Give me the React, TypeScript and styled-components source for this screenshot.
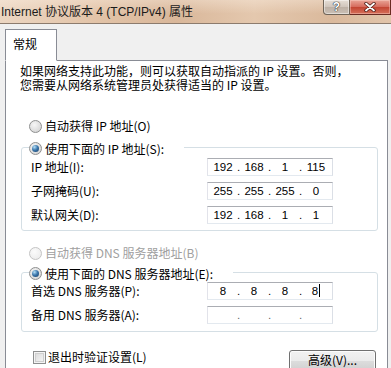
import React from 'react'
import styled, { createGlobalStyle } from 'styled-components'

const GlobalStyle = createGlobalStyle`
    html, body {
        margin: 0;
        padding: 0;
    }
    body {
        width: 391px;
        height: 368px;
        overflow: hidden;
        background: #f0f0f0;
        font-family: "Noto Sans CJK SC", "Noto Sans", sans-serif;
        font-size: 12px;
        color: #000;
    }
    * {
        box-sizing: border-box;
    }
`

const TitleBar = styled.div`
    display: flex;
    justify-content: space-between;
    align-items: flex-start;
    height: 24px;
    border-bottom: 1px solid #8c7b6d;
    background:
        linear-gradient(180deg, rgba(255, 245, 235, 0.35), rgba(255, 255, 255, 0) 60%),
        linear-gradient(90deg, #ecd6c2 0%, #e2c3a7 25%, #d9b79a 45%, #e4c8ae 65%, #dab99c 85%, #e1c4aa 100%);
`
const Title = styled.div`
    padding: 4px 0 0 1px;
    font-family: "Liberation Sans", "Noto Sans CJK SC", sans-serif;
    font-size: 12px;
    line-height: 16px;
    color: #1b1b1b;
    white-space: nowrap;
`
const Controls = styled.div`
    display: flex;
`
const HelpButton = styled.div`
    width: 27px;
    height: 15px;
    display: flex;
    align-items: center;
    justify-content: center;
    border: 1px solid #6f6458;
    border-top: none;
    border-radius: 0 0 0 4px;
    background: linear-gradient(180deg, #e6ded6 0%, #cfc5bb 50%, #bcb0a5 50%, #cbc0b5 100%);
    box-shadow: inset 0 0 0 1px rgba(255, 255, 255, 0.45);
    font-family: "Liberation Sans", sans-serif;
    font-weight: bold;
    font-size: 12px;
    line-height: 12px;
    color: #fff;
    text-shadow: 0 0 1px #333, 0 0 1px #333, 0 0 1px #333;
`
const CloseButton = styled.div`
    width: 41px;
    height: 15px;
    display: flex;
    align-items: center;
    justify-content: center;
    border: 1px solid #6a2a22;
    border-top: none;
    border-left: none;
    background: linear-gradient(180deg, #e9a597 0%, #d5695b 50%, #c24331 50%, #d6705a 100%);
    box-shadow: inset 0 0 0 1px rgba(255, 220, 210, 0.4);
`

const TabStrip = styled.div`
    display: flex;
    padding: 5px 0 0 5px;
`
const Tab = styled.div`
    position: relative;
    z-index: 1;
    width: 52px;
    height: 32px;
    margin-bottom: -1px;
    padding: 6px 0 0 7px;
    background: #fff;
    border: 1px solid #898c95;
    border-bottom: 1px solid #fff;
    line-height: 16px;
`

const Panel = styled.div`
    height: 320px;
    margin: 0 3px 0 5px;
    padding-top: 3px;
    background: #fff;
    border: 1px solid #898c95;
`
const Description = styled.p`
    margin: 0;
    padding-left: 14px;
    line-height: 14px;
    white-space: nowrap;
`

const OptionRow = styled.div<{ $top: number }>`
    display: flex;
    align-items: center;
    height: 18px;
    margin: ${p => p.$top}px 0 0 23px;
`
const OptionLabel = styled.span<{ $disabled?: boolean }>`
    display: inline-flex;
    align-items: center;
    gap: 3px;
    height: 18px;
    line-height: 18px;
    white-space: nowrap;
    color: ${p => (p.$disabled ? '#a0a0a0' : '#000')};
`
const RadioCircle = styled.span<{ $disabled?: boolean }>`
    display: inline-flex;
    align-items: center;
    justify-content: center;
    width: 13px;
    height: 13px;
    border-radius: 50%;
    border: 1px solid ${p => (p.$disabled ? '#c4c4c4' : '#8e8f8f')};
    background: ${p =>
        p.$disabled
            ? 'radial-gradient(circle at 40% 35%, #fbfbfb, #e8e8e8)'
            : 'radial-gradient(circle at 40% 35%, #f6f6f6, #d6d6d6 80%, #c9c9c9)'};
`
const RadioDot = styled.span`
    width: 7px;
    height: 7px;
    border-radius: 50%;
    background: radial-gradient(circle at 35% 30%, #b5e0f7 0%, #3d78ad 45%, #123a62 100%);
`

const Group = styled.fieldset<{ $top: number; $bottom: number }>`
    margin: ${p => p.$top}px 9px 0 15px;
    padding: 0 0 ${p => p.$bottom}px 7px;
    border: 1px solid #d5dfe5;
    border-radius: 3px;
    min-width: 0;
`
const Legend = styled.legend`
    padding: 0 20px 0 0;
    height: 18px;
    line-height: 18px;
`
const FieldList = styled.div<{ $top: number }>`
    display: flex;
    flex-direction: column;
    gap: 6px;
    padding: ${p => p.$top}px 0 0 2px;
`
const FieldRow = styled.div`
    display: grid;
    grid-template-columns: 176px 126px;
    align-items: center;
    height: 18px;
`
const FieldLabel = styled.span`
    white-space: nowrap;
    line-height: 18px;
`
const IpBox = styled.div`
    display: flex;
    align-items: center;
    height: 18px;
    padding-left: 3px;
    background: #fff;
    border: 1px solid;
    border-color: #abadb3 #dbdfe6 #e3e9ef #e2e3ea;
    font-family: "Liberation Sans", sans-serif;
    font-size: 11.5px;
    line-height: 14px;
`
const Octet = styled.span`
    width: 24px;
    text-align: center;
`
const Dot = styled.span<{ $faint?: boolean }>`
    width: 7px;
    text-align: center;
    color: ${p => (p.$faint ? '#666' : '#000')};
`
const Caret = styled.span`
    display: inline-block;
    width: 1px;
    height: 13px;
    margin-left: 1px;
    vertical-align: -2px;
    background: #000;
`

const Footer = styled.div`
    display: flex;
    justify-content: space-between;
    align-items: flex-start;
    margin-top: 18px;
    padding: 0 11px 0 27px;
`
const CheckLabel = styled.span`
    display: inline-flex;
    align-items: center;
    gap: 2px;
    height: 14px;
    line-height: 14px;
    white-space: nowrap;
`
const CheckBox = styled.span`
    width: 13px;
    height: 13px;
    border: 1px solid #8e8f8f;
    background: linear-gradient(135deg, #d6d6d6 0%, #ececec 60%, #f9f9f9 100%);
    box-shadow: inset 0 0 0 1px #f4f4f4, inset 0 0 0 2px #cfcfcf;
`
const PushButton = styled.button`
    width: 87px;
    height: 22px;
    padding: 0 0 2px;
    border: 1px solid #707070;
    border-radius: 3px;
    background: linear-gradient(180deg, #f2f2f2 0%, #ebebeb 49%, #dddddd 50%, #cfcfcf 100%);
    box-shadow: inset 0 0 0 1px #fcfcfc;
    font-family: "Noto Sans CJK SC", sans-serif;
    font-size: 12px;
    line-height: 18px;
    color: #000;
`

type Radio = { text: string; checked?: boolean; disabled?: boolean }

const RadioOption = ({ text, checked, disabled }: Radio) => (
    <OptionLabel $disabled={disabled}>
        <RadioCircle $disabled={disabled}>{checked && <RadioDot />}</RadioCircle>
        {text}
    </OptionLabel>
)

const IpField = ({ parts, caret }: { parts: string[]; caret?: boolean }) => {
    const empty = parts.every(p => p === '')
    return (
        <IpBox>
            {parts.map((part, index) => (
                <React.Fragment key={index}>
                    {index > 0 && <Dot $faint={empty}>.</Dot>}
                    <Octet>
                        {part}
                        {caret && index === parts.length - 1 && <Caret />}
                    </Octet>
                </React.Fragment>
            ))}
        </IpBox>
    )
}

const ipRows = [
    { label: 'IP 地址(I):', parts: ['192', '168', '1', '115'] },
    { label: '子网掩码(U):', parts: ['255', '255', '255', '0'] },
    { label: '默认网关(D):', parts: ['192', '168', '1', '1'] },
]

const dnsRows = [
    { label: '首选 DNS 服务器(P):', parts: ['8', '8', '8', '8'], caret: true },
    { label: '备用 DNS 服务器(A):', parts: ['', '', '', ''] },
]

const App = () => {
    return (
        <>
            <GlobalStyle />
            <TitleBar>
                <Title>Internet 协议版本 4 (TCP/IPv4) 属性</Title>
                <Controls>
                    <HelpButton>?</HelpButton>
                    <CloseButton>
                        <svg width="12" height="10" viewBox="0 0 12 10">
                            <path d="M2 1.5 L10 8.5 M10 1.5 L2 8.5" stroke="#4a1a14" strokeWidth="3.4" strokeLinecap="round" />
                            <path d="M2 1.5 L10 8.5 M10 1.5 L2 8.5" stroke="#fff" strokeWidth="1.8" strokeLinecap="round" />
                        </svg>
                    </CloseButton>
                </Controls>
            </TitleBar>

            <TabStrip>
                <Tab>常规</Tab>
            </TabStrip>

            <Panel>
                <Description>
                    如果网络支持此功能，则可以获取自动指派的 IP 设置。否则，
                    <br />
                    您需要从网络系统管理员处获得适当的 IP 设置。
                </Description>

                <OptionRow $top={25}>
                    <RadioOption text="自动获得 IP 地址(O)" />
                </OptionRow>
                <Group $top={3} $bottom={6}>
                    <Legend>
                        <RadioOption text="使用下面的 IP 地址(S):" checked />
                    </Legend>
                    <FieldList $top={2}>
                        {ipRows.map(row => (
                            <FieldRow key={row.label}>
                                <FieldLabel>{row.label}</FieldLabel>
                                <IpField parts={row.parts} />
                            </FieldRow>
                        ))}
                    </FieldList>
                </Group>

                <OptionRow $top={13}>
                    <RadioOption text="自动获得 DNS 服务器地址(B)" disabled />
                </OptionRow>
                <Group $top={1} $bottom={7}>
                    <Legend>
                        <RadioOption text="使用下面的 DNS 服务器地址(E):" checked />
                    </Legend>
                    <FieldList $top={1}>
                        {dnsRows.map(row => (
                            <FieldRow key={row.label}>
                                <FieldLabel>{row.label}</FieldLabel>
                                <IpField parts={row.parts} caret={row.caret} />
                            </FieldRow>
                        ))}
                    </FieldList>
                </Group>

                <Footer>
                    <CheckLabel>
                        <CheckBox />
                        退出时验证设置(L)
                    </CheckLabel>
                    <PushButton>高级(V)...</PushButton>
                </Footer>
            </Panel>
        </>
    )
}

export default App
